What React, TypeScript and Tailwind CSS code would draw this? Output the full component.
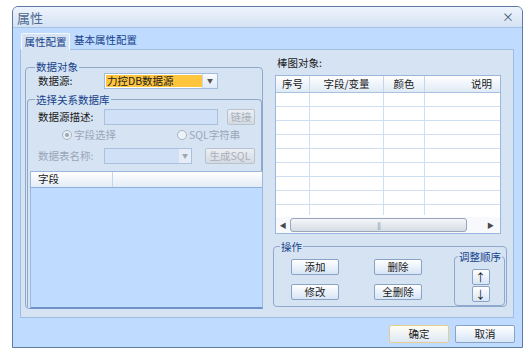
import React from "react";

function Btn({ children, className = "", disabled = false }: { children: React.ReactNode; className?: string; disabled?: boolean }) {
  return (
    <div
      className={
        "flex items-center justify-center whitespace-nowrap rounded-[2px] border " +
        (disabled
          ? "border-[#b9c3d0] bg-gradient-to-b from-[#eceff3] to-[#d5dae1] text-[#a7afbb] "
          : "border-[#8aa2c4] bg-gradient-to-b from-[#ffffff] to-[#d7e5f6] text-[#1a1a1a] ") +
        className
      }
    >
      {children}
    </div>
  );
}

function Legend({ children, className = "" }: { children: React.ReactNode; className?: string }) {
  return (
    <span className={"absolute whitespace-nowrap bg-[#d6e3f2] px-[1px] text-[10.5px] leading-[11px] text-[#15428b] " + className}>{children}</span>
  );
}

export default function App() {
  const rows = Array.from({ length: 8 });
  return (
    <div className="w-[530px] h-[356px] bg-white pt-[6px] pl-[12px] font-['Noto_Sans_CJK_SC','Liberation_Sans',sans-serif] text-[10.5px] leading-none text-[#1a1a1a]">
      <div className="w-[511px] h-[342px] border border-[#5d7aa3] rounded-t-[6px] flex flex-col overflow-hidden bg-[#bfdbff]">
        {/* title bar */}
        <div className="h-[21px] shrink-0 bg-gradient-to-b from-[#eef4fc] to-[#d4e2f3] border-b border-[#a9c2e1] flex items-center justify-between pl-[4px] pr-[8px]">
          <span className="text-[13px] text-[#4d6a93]">属性</span>
          <span className="text-[12px] text-[#4a5a70]">×</span>
        </div>

        {/* tabs */}
        <div className="h-[21px] shrink-0 flex items-end pl-[8px] gap-[3px]">
          <div className="relative z-10 -mb-px h-[17px] w-[49px] whitespace-nowrap bg-[#d6e3f2] border border-b-0 border-[#f4f8fd] rounded-t-[2px] flex items-center justify-center text-[#15428b]">
            属性配置
          </div>
          <div className="h-[17px] flex items-center pl-[1px] whitespace-nowrap text-[#15428b]">基本属性配置</div>
        </div>

        {/* tab page */}
        <div className="ml-[7px] w-[494px] h-[269px] shrink-0 bg-[#d6e3f2] border border-[#9fbde3] flex">
          {/* left column */}
          <div className="w-[244px] shrink-0 pl-[4px] pt-[17px]">
            <div className="relative h-[242px] w-[238px] border border-[#8ea9cc] rounded-[4px]">
              <Legend className="left-[9px] top-[-7px]">数据对象</Legend>
              {/* 数据源 */}
              <div className="flex items-center h-[16px] mt-[5px] pl-[12px]">
                <span className="w-[66px]">数据源:</span>
                <div className="w-[114px] h-[16px] bg-white border border-[#a3bbdb] flex items-center">
                  <div className="ml-[1px] w-[96px] h-[12px] bg-[#ffc53d] flex items-center pl-[1px] text-[#222] whitespace-nowrap">力控DB数据源</div>
                  <div className="ml-auto w-[15px] h-[14px] bg-gradient-to-b from-[#fafcff] to-[#dfe9f6] border-l border-[#c8d6e8] flex items-center justify-center text-[6px] text-[#555]">▼</div>
                </div>
              </div>

              {/* nested group */}
              <div className="relative mt-[10px] ml-[1px] h-[208px] border-t border-l border-r border-[#8ea9cc] rounded-t-[4px]">
                <Legend className="left-[7px] top-[-6px]">选择关系数据库</Legend>
                <div className="flex items-center h-[16px] mt-[9px] pl-[10px]">
                  <span className="w-[66px] whitespace-nowrap">数据源描述:</span>
                  <div className="w-[114px] h-[16px] bg-[#cfe0f7] border border-[#a9c0de]" />
                  <Btn disabled className="ml-[9px] w-[28px] h-[16px]">链接</Btn>
                </div>
                <div className="flex items-center h-[14px] mt-[3px] text-[#9aa6b8] whitespace-nowrap">
                  <div className="ml-[34px] flex items-center">
                    <span className="w-[10px] h-[10px] rounded-full border border-[#a9b4c4] bg-[#e8eef6] flex items-center justify-center">
                      <span className="w-[4px] h-[4px] rounded-full bg-[#9aa6b8]" />
                    </span>
                    <span className="ml-[2px]">字段选择</span>
                  </div>
                  <div className="ml-[61px] flex items-center">
                    <span className="w-[10px] h-[10px] rounded-full border border-[#a9b4c4] bg-[#eef3f9]" />
                    <span className="ml-[2px]">SQL字符串</span>
                  </div>
                </div>
                <div className="flex items-center h-[16px] mt-[6px] pl-[10px] text-[#9aa6b8]">
                  <span className="w-[66px] whitespace-nowrap">数据表名称:</span>
                  <div className="w-[88px] h-[16px] bg-[#cfe0f7] border border-[#a9c0de] flex justify-end">
                    <div className="w-[12px] h-[14px] bg-[#e6edf6] flex items-center justify-center text-[6px] text-[#9aa6b8]">▼</div>
                  </div>
                  <Btn disabled className="ml-[13px] w-[50px] h-[16px]">生成SQL</Btn>
                </div>
                {/* grid */}
                <div className="mt-[7px] ml-[2px] w-[233px] h-[138px] border border-[#9ab6dc] border-b-2 border-b-[#6f93c6] bg-[#bfdbff] flex flex-col">
                  <div className="h-[16px] shrink-0 bg-gradient-to-b from-[#ffffff] to-[#e3ecf7] border-b border-[#8fb0da] flex">
                    <div className="w-[82px] border-r border-[#c3d6ee] flex items-center pl-[7px]">字段</div>
                  </div>
                </div>
              </div>
            </div>
          </div>

          {/* right column */}
          <div className="flex-1 pl-[10px] pt-[8px] flex flex-col">
            <div className="pl-[2px] h-[12px] whitespace-nowrap">棒图对象:</div>
            <div className="mt-[5px] w-[226px] h-[159px] bg-white border border-[#9ab6dc] flex flex-col">
              <div className="h-[17px] shrink-0 bg-gradient-to-b from-[#ffffff] to-[#e0eaf6] border-b border-[#a7c1e3] flex whitespace-nowrap">
                <div className="w-[34px] border-r border-[#c3d6ee] flex items-center justify-center">序号</div>
                <div className="w-[74px] border-r border-[#c3d6ee] flex items-center justify-center">字段/变量</div>
                <div className="w-[41px] border-r border-[#c3d6ee] flex items-center justify-center">颜色</div>
                <div className="flex-1 flex items-center justify-end pr-[8px]">说明</div>
              </div>
              <div className="flex-1 flex flex-col overflow-hidden">
                {rows.map((_, i) => (
                  <div key={i} className="h-[14px] shrink-0 border-b border-[#cfdff3] flex">
                    <div className="w-[34px] border-r border-[#cfdff3]" />
                    <div className="w-[74px] border-r border-[#cfdff3]" />
                    <div className="w-[41px] border-r border-[#cfdff3]" />
                  </div>
                ))}
                <div className="h-[10px] shrink-0 flex">
                  <div className="w-[34px] border-r border-[#cfdff3]" />
                  <div className="w-[74px] border-r border-[#cfdff3]" />
                  <div className="w-[41px] border-r border-[#cfdff3]" />
                </div>
              </div>
              {/* scrollbar */}
              <div className="h-[16px] shrink-0 flex items-center bg-[#f7f9fc]">
                <div className="w-[14px] flex items-center justify-center text-[7px] text-[#4a4a4a]">◀</div>
                <div className="w-[177px] h-[14px] rounded-[3px] border border-[#98a6b8] bg-gradient-to-b from-[#f4f6f9] to-[#d6dce5] flex items-center justify-center">
                  <span className="text-[7px] tracking-[-1px] text-[#8a96a6]">|||</span>
                </div>
                <div className="flex-1 flex items-center justify-end pr-[6px] text-[7px] text-[#4a4a4a]">▶</div>
              </div>
            </div>

            {/* 操作 */}
            <div className="relative mt-[12px] w-[234px] h-[61px] -ml-[2px] border border-[#8ea9cc] rounded-[4px] flex">
              <Legend className="left-[6px] top-[-6px]">操作</Legend>
              <div className="flex flex-col gap-[9px] pt-[12px] pl-[17px]">
                <Btn className="w-[48px] h-[16px]">添加</Btn>
                <Btn className="w-[48px] h-[16px]">修改</Btn>
              </div>
              <div className="flex flex-col gap-[9px] pt-[12px] pl-[35px]">
                <Btn className="w-[48px] h-[16px]">删除</Btn>
                <Btn className="w-[48px] h-[16px]">全删除</Btn>
              </div>
              <div className="relative ml-auto mr-[1px] mt-[9px] w-[51px] h-[50px] border border-[#8ea9cc] rounded-[4px] flex flex-col items-center pt-[12px] gap-[1px]">
                <Legend className="left-[3px] top-[-6px]">调整顺序</Legend>
                <Btn className="w-[18px] h-[16px] ml-[2px] text-[11px]">↑</Btn>
                <Btn className="w-[18px] h-[16px] ml-[2px] text-[11px]">↓</Btn>
              </div>
            </div>
          </div>
        </div>

        {/* bottom buttons */}
        <div className="flex justify-end gap-[6px] pr-[7px] mt-[7px]">
          <div className="w-[60px] h-[18px] rounded-[2px] border border-[#e6cf8e] bg-gradient-to-b from-[#fffdf3] to-[#dde8f5] flex items-center justify-center">确定</div>
          <Btn className="w-[60px] h-[18px]">取消</Btn>
        </div>
      </div>
    </div>
  );
}
